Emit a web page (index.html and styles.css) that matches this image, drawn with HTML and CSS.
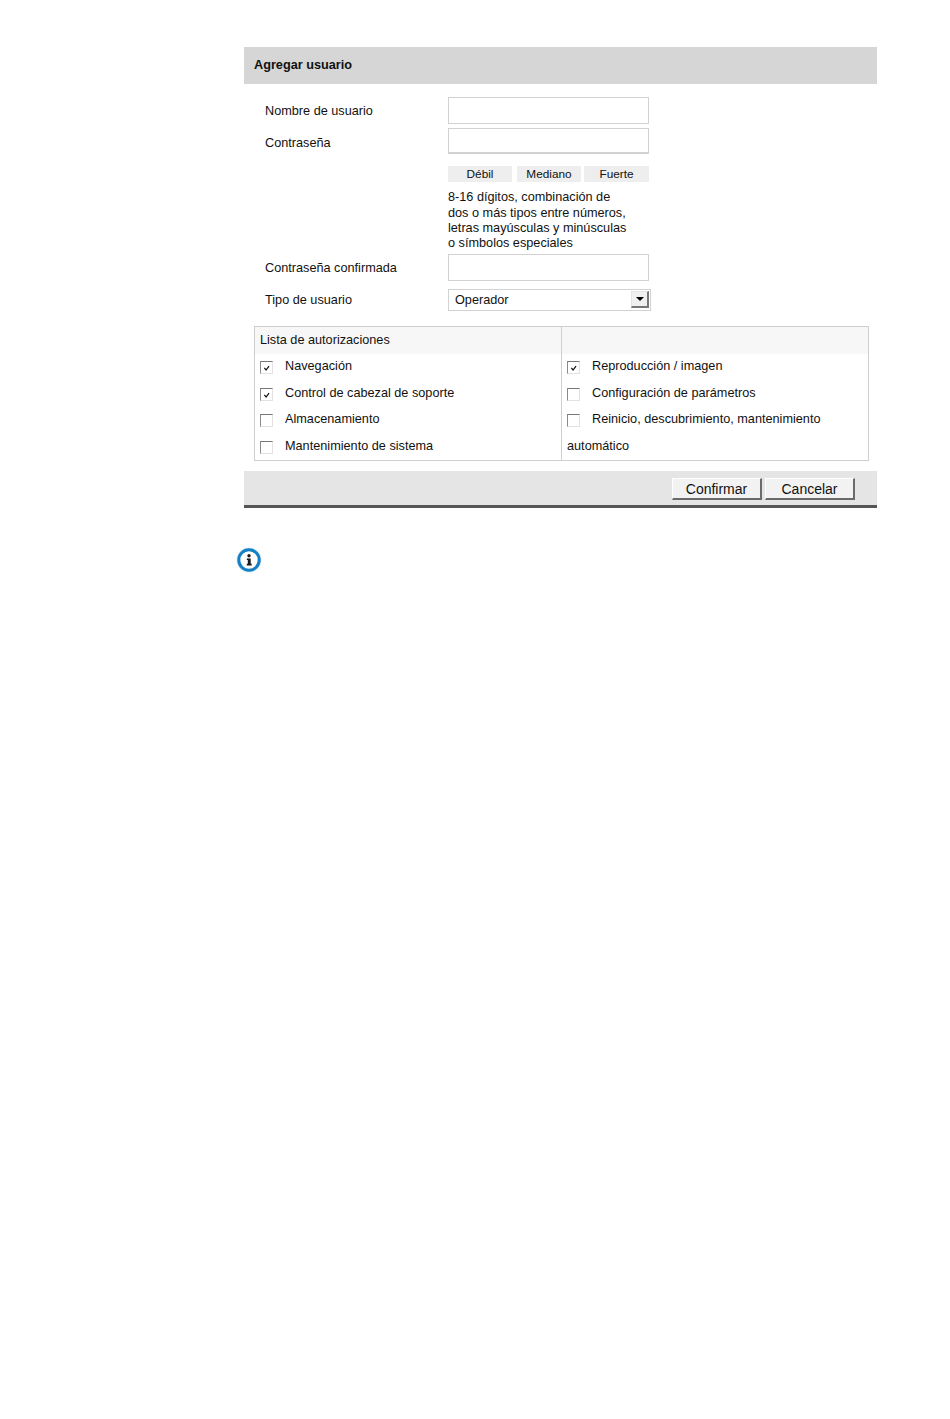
FILE: index.html
```html
<!DOCTYPE html>
<html lang="es">
<head>
    <meta charset="UTF-8">
    <title>Agregar usuario</title>
    <link rel="stylesheet" href="styles.css">
</head>
<body>
    <div class="panel">
        <h1 class="panel-title">Agregar usuario</h1>

        <!-- User fields -->
        <form class="user-form">
            <div class="row row-first">
                <label class="row-label" for="user_name">Nombre de usuario</label>
                <input class="text-input" type="text" id="user_name">
            </div>
            <div class="row row-pass">
                <label class="row-label" for="password">Contraseña</label>
                <input class="text-input text-input-short" type="password" id="password">
            </div>
            <div class="strength">
                <span class="strength-weak">Débil</span>
                <span class="strength-mid">Mediano</span>
                <span class="strength-strong">Fuerte</span>
            </div>
            <p class="hint">8-16 dígitos, combinación de<br>dos o más tipos entre números,<br>letras mayúsculas y minúsculas<br>o símbolos especiales</p>
            <div class="row row-confirm">
                <label class="row-label" for="password2">Contraseña confirmada</label>
                <input class="text-input" type="password" id="password2">
            </div>
            <div class="row row-type">
                <span class="row-label">Tipo de usuario</span>
                <div class="select-box">
                    <span>Operador</span>
                    <span class="select-arrow"></span>
                </div>
            </div>
        </form>

        <!-- Permissions -->
        <div class="perm-table">
            <div class="perm-col">
                <div class="perm-head">Lista de autorizaciones</div>
                <div class="perm-item"><span class="box"><svg viewBox="0 0 13 13"><path d="M4 7l2 2.500L9.500 5" /></svg></span>Navegación</div>
                <div class="perm-item"><span class="box"><svg viewBox="0 0 13 13"><path d="M4 7l2 2.500L9.500 5" /></svg></span>Control de cabezal de soporte</div>
                <div class="perm-item"><span class="box"></span>Almacenamiento</div>
                <div class="perm-item"><span class="box"></span>Mantenimiento de sistema</div>
            </div>
            <div class="perm-col perm-col-right">
                <div class="perm-head"></div>
                <div class="perm-item"><span class="box"><svg viewBox="0 0 13 13"><path d="M4 7l2 2.500L9.500 5" /></svg></span>Reproducción / imagen</div>
                <div class="perm-item"><span class="box"></span>Configuración de parámetros</div>
                <div class="perm-item perm-item-wrap"><span class="box"></span>Reinicio, descubrimiento, mantenimiento automático</div>
            </div>
        </div>

        <div class="panel-footer">
            <button class="btn" type="button">Confirmar</button>
            <button class="btn" type="button">Cancelar</button>
        </div>
    </div>

    <div class="note-icon">
        <svg width="26" height="26" viewBox="0 0 26 26">
            <circle cx="13" cy="13" r="12.500" fill="#d5e8f4"/>
            <circle cx="13" cy="13" r="10.200" fill="#fff" stroke="#1480c4" stroke-width="3"/>
            <circle cx="13" cy="8.700" r="1.700" fill="#1a1a1a"/>
            <path d="M10.800 11.400h3.900v5.400h1v1.700h-4.900v-1.700h1v-3.700h-1z" fill="#1a1a1a"/>
        </svg>
    </div>
</body>
</html>
```

FILE: styles.css
```css
body {
    font-family: "Liberation Sans", Arial, sans-serif;
    font-size: 12.700px;
    color: #111;
    background-color: #fff;
    margin: 0;
    padding: 47px 0 0 244px;
}

.panel {
    width: 633px;
}

.panel-title {
    margin: 0;
    height: 37px;
    line-height: 36px;
    padding-left: 10px;
    font-size: 12.700px;
    font-weight: bold;
    background-color: #d6d6d6;
}

/* Form rows */
.user-form {
    padding-top: 13px;
}

.row {
    display: flex;
    align-items: center;
}

.row-pass {
    margin-top: 4px;
}

.row-confirm {
    margin-top: 2px;
}

.row-type {
    margin-top: 8px;
}

.row-label {
    width: 183px;
    padding-left: 21px;
}

.row-pass .row-label {
    margin-top: 4px;
}

.row-confirm .row-label {
    margin-top: 2px;
}

.text-input {
    width: 201px;
    height: 27px;
    box-sizing: border-box;
    border: 1px solid #d2d2d2;
    padding: 0 6px;
    margin: 0;
    background-color: #fff;
}

.text-input-short {
    height: 26px;
    border-bottom-width: 2px;
}

.strength {
    display: flex;
    margin: 12px 0 0 204px;
    width: 201px;
    height: 16px;
    line-height: 16px;
    font-size: 11.800px;
    text-align: center;
}

.strength span {
    background-color: #eeeeee;
}

.strength-weak,
.strength-mid {
    width: 64px;
}

.strength-mid {
    margin-left: 5px;
}

.strength-strong {
    width: 65px;
    margin-left: 3px;
}

.hint {
    margin: 8.400px 0 0 204px;
    line-height: 15.300px;
}

.select-box {
    width: 203px;
    height: 22px;
    box-sizing: border-box;
    border: 1px solid #d2d2d2;
    padding: 0 1px 0 6px;
    display: flex;
    align-items: center;
    justify-content: space-between;
}

.select-arrow {
    width: 18px;
    height: 17px;
    box-sizing: border-box;
    background-color: #f0f0f0;
    border-right: 2px solid #777;
    border-bottom: 2px solid #777;
    border-top: 1px solid #e4e4e4;
    border-left: 1px solid #e4e4e4;
    display: flex;
    align-items: center;
    justify-content: center;
}

.select-arrow::after {
    content: "";
    border-left: 4px solid transparent;
    border-right: 4px solid transparent;
    border-top: 4px solid #000;
}

/* Permissions table */
.perm-table {
    display: flex;
    box-sizing: border-box;
    width: 615px;
    height: 135px;
    margin: 15px 0 10px 10px;
    border: 1px solid #cfcfcf;
}

.perm-col {
    width: 306px;
    flex: none;
}

.perm-col-right {
    border-left: 1px solid #cfcfcf;
}

.perm-head {
    height: 27px;
    line-height: 26px;
    padding-left: 5px;
    background-color: #f7f7f7;
}

.perm-item {
    height: 26px;
    line-height: 24px;
    padding-left: 5px;
}

/* rows step 27, 26, 27 */
.perm-item:nth-child(even) {
    margin-bottom: 1px;
}

.perm-item-wrap {
    height: auto;
    margin-top: -1px;
    line-height: 27px;
}

.box {
    display: inline-block;
    vertical-align: -4px;
    box-sizing: border-box;
    width: 13px;
    height: 13px;
    margin-right: 12px;
    border: 1px solid #e2e2e2;
    border-top-color: #777;
    border-left-color: #8a8a8a;
    background-color: #fff;
}

.box svg {
    display: block;
    width: 11px;
    height: 11px;
    fill: none;
    stroke: #111;
    stroke-width: 1.500;
}

/* Footer */
.panel-footer {
    box-sizing: border-box;
    height: 37px;
    padding: 7px 22px 0 0;
    display: flex;
    justify-content: flex-end;
    align-items: flex-start;
    gap: 3px;
    background-color: #e5e5e5;
    border-bottom: 3px solid #555;
}

.btn {
    width: 90px;
    height: 22px;
    padding: 1px 0 0;
    font-family: "Liberation Sans", Arial, sans-serif;
    font-size: 14px;
    color: #111;
    background-color: #f2f2f2;
    border: 1px solid #fff;
    border-right: 2px solid #6a6a6a;
    border-bottom: 2px solid #6a6a6a;
}

.note-icon {
    margin: 39px 0 0 -8px;
    width: 26px;
    height: 26px;
}

.note-icon svg {
    display: block;
}
```
